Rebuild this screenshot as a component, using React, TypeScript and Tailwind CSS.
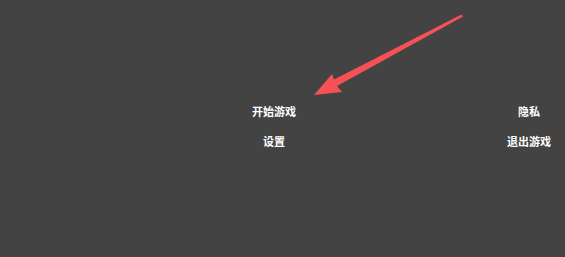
const MenuItem = ({ label }: { label: string }) => (
  <button className="h-[30px] w-[80px] text-center text-[11px] font-bold leading-[30px] text-white">
    {label}
  </button>
)

const App = () => {
  return (
    <div
      className="relative h-[257px] w-[565px] overflow-hidden bg-[#434343]"
      style={{ fontFamily: '"Noto Sans CJK SC", "Noto Sans", sans-serif' }}
    >
      <div className="flex gap-[175px] pl-[234px] pt-[96px]">
        <div className="flex flex-col">
          <MenuItem label="开始游戏" />
          <MenuItem label="设置" />
        </div>
        <div className="flex flex-col">
          <MenuItem label="隐私" />
          <MenuItem label="退出游戏" />
        </div>
      </div>

      {/* annotation arrow */}
      <svg className="pointer-events-none absolute left-0 top-0" width="565" height="257" viewBox="0 0 565 257">
        <polygon points="461.5,14.5 463,16.5 337,86 342,92 314,95 332,74 334,79.5" fill="#f65256" />
      </svg>
    </div>
  )
}

export default App
